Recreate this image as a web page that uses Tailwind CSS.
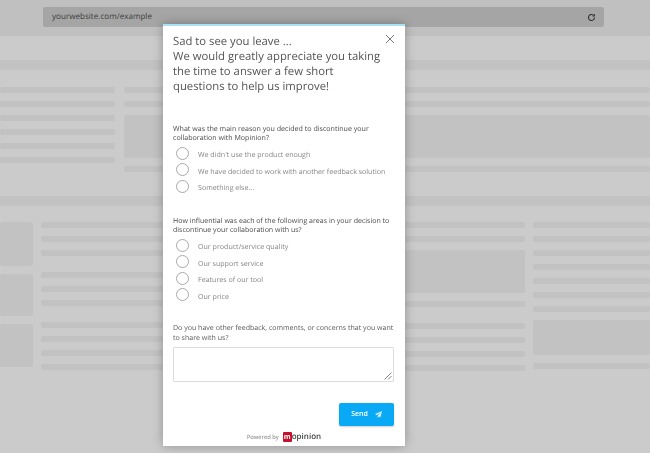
<!DOCTYPE html>
<html lang="en">
<head>
  <meta charset="UTF-8" />
  <title>Mopinion exit survey</title>
  <script src="https://cdn.jsdelivr.net/npm/@tailwindcss/browser@4"></script>
</head>
<body class="bg-[#cbcbcb] font-['Open_Sans',sans-serif] [text-rendering:geometricPrecision] overflow-hidden">
  <div class="relative w-[650px] h-[453px] overflow-hidden blur-[0.3px]">

    <!-- fake browser bar -->
    <div class="h-[36px] bg-[#c0c0c0] pl-[43px] pr-[46px] pt-[7px]">
      <div class="h-[20px] rounded-[2px] bg-[#a5a5a5] flex items-center justify-between pl-[9px] pr-[8px]">
        <span class="text-[8.1px] text-[#3d3d3d]">yourwebsite.com/example</span>
        <svg class="w-[9px] h-[9px]" viewBox="0 0 24 24" fill="none" stroke="#333" stroke-width="3">
          <path d="M20 12a8 8 0 1 1-2.6-5.9" />
          <path d="M21 2v7h-7z" fill="#333" stroke="none" />
        </svg>
      </div>
    </div>

    <!-- fake website behind the survey -->
    <div class="pt-[24px]">
      <div class="h-[10px] bg-[#c2c2c2]"></div>
      <div class="flex gap-[9px] mt-[17px] h-[85px]">
        <div class="w-[115px] flex flex-col gap-[8.5px]">
          <div class="h-[5.5px] rounded-[2px] bg-[#c2c2c2]"></div>
          <div class="h-[5.5px] rounded-[2px] bg-[#c2c2c2]"></div>
          <div class="h-[5.5px] rounded-[2px] bg-[#c2c2c2]"></div>
          <div class="h-[5.5px] rounded-[2px] bg-[#c2c2c2]"></div>
          <div class="h-[5.5px] rounded-[2px] bg-[#c2c2c2]"></div>
          <div class="h-[5.5px] rounded-[2px] bg-[#c2c2c2]"></div>
        </div>
        <div class="flex-1 flex flex-col">
          <div class="h-[5.5px] rounded-[2px] bg-[#c2c2c2]"></div>
          <div class="h-[5.5px] rounded-[2px] bg-[#c2c2c2] mt-[8.5px]"></div>
          <div class="h-[43px] rounded-[2px] bg-[#c2c2c2] mt-[8.5px]"></div>
          <div class="h-[5.5px] rounded-[2px] bg-[#c2c2c2] mt-[8px]"></div>
        </div>
      </div>
      <div class="h-[10px] bg-[#c2c2c2] mt-[24px]"></div>

      <div class="flex gap-[8px] mt-[16px]">
        <div class="w-[33px] flex flex-col gap-[8px]">
          <div class="h-[44px] rounded-[2px] bg-[#c2c2c2]"></div>
          <div class="h-[42px] rounded-[2px] bg-[#c2c2c2]"></div>
          <div class="h-[43px] rounded-[2px] bg-[#c2c2c2]"></div>
        </div>
        <div class="w-[484px] flex gap-[8px]">
          <div class="w-[238px] flex flex-col">
            <div class="h-[6px] rounded-[2px] bg-[#c2c2c2]"></div>
            <div class="h-[6px] rounded-[2px] bg-[#c2c2c2] mt-[8px]"></div>
            <div class="h-[6px] rounded-[2px] bg-[#c2c2c2] mt-[8px]"></div>
            <div class="h-[6px] rounded-[2px] bg-[#c2c2c2] mt-[16px]"></div>
            <div class="h-[6px] rounded-[2px] bg-[#c2c2c2] mt-[8px]"></div>
            <div class="h-[6px] rounded-[2px] bg-[#c2c2c2] mt-[8px]"></div>
            <div class="h-[6px] rounded-[2px] bg-[#c2c2c2] mt-[16px]"></div>
            <div class="h-[6px] rounded-[2px] bg-[#c2c2c2] mt-[8px]"></div>
            <div class="h-[6px] rounded-[2px] bg-[#c2c2c2] mt-[8px]"></div>
            <div class="h-[6px] rounded-[2px] bg-[#c2c2c2] mt-[8px]"></div>
          </div>
          <div class="flex-1 flex flex-col">
            <div class="h-[6px] rounded-[2px] bg-[#c2c2c2]"></div>
            <div class="h-[6px] rounded-[2px] bg-[#c2c2c2] mt-[8px]"></div>
            <div class="h-[43px] rounded-[2px] bg-[#c2c2c2] mt-[8px]"></div>
            <div class="h-[6px] rounded-[2px] bg-[#c2c2c2] mt-[8px]"></div>
            <div class="h-[6px] rounded-[2px] bg-[#c2c2c2] mt-[16px]"></div>
            <div class="h-[6px] rounded-[2px] bg-[#c2c2c2] mt-[8px]"></div>
            <div class="h-[6px] rounded-[2px] bg-[#c2c2c2] mt-[8px]"></div>
            <div class="h-[6px] rounded-[2px] bg-[#c2c2c2] mt-[8px]"></div>
          </div>
        </div>
        <div class="flex-1 flex flex-col">
          <div class="h-[6px] rounded-[2px] bg-[#c2c2c2]"></div>
          <div class="h-[6px] rounded-[2px] bg-[#c2c2c2] mt-[8px]"></div>
          <div class="h-[6px] rounded-[2px] bg-[#c2c2c2] mt-[8px]"></div>
          <div class="h-[6px] rounded-[2px] bg-[#c2c2c2] mt-[8px]"></div>
          <div class="h-[6px] rounded-[2px] bg-[#c2c2c2] mt-[8px]"></div>
          <div class="h-[6px] rounded-[2px] bg-[#c2c2c2] mt-[8px]"></div>
          <div class="h-[6px] rounded-[2px] bg-[#c2c2c2] mt-[8px]"></div>
          <div class="h-[35px] rounded-[2px] bg-[#c2c2c2] mt-[8px]"></div>
          <div class="h-[6px] rounded-[2px] bg-[#c2c2c2] mt-[8px]"></div>
        </div>
      </div>
    </div>

    <!-- survey modal -->
    <div class="absolute left-[163px] top-[24px] w-[242px] h-[422px] bg-white border-t-2 border-[#a9e1f6] shadow-[0_0_10px_rgba(0,0,0,0.28)] flex flex-col pl-[10px] pr-[11px]">
      <button class="absolute right-[11px] top-[9px] w-[8px] h-[8px]">
        <svg class="w-[8px] h-[8px] block" viewBox="0 0 9 9" fill="none" stroke="#555" stroke-width="0.9"><path d="M0 0l9 9M9 0l-9 9" /></svg>
      </button>

      <h1 class="mt-[8px] text-[11.3px] leading-[15px] whitespace-nowrap text-[#555] font-normal">Sad to see you leave ...<br />We would greatly appreciate you taking<br />the time to answer a few short<br />questions to help us improve!</h1>

      <p class="mt-[30.5px] text-[7.1px] leading-[9.5px] whitespace-nowrap text-[#4a4a4a]">What was the main reason you decided to discontinue your<br />collaboration with Mopinion?</p>
      <div class="mt-[3px] flex flex-col gap-[3.5px] pl-[3px]">
        <label class="flex items-center gap-[9px] h-[13px] text-[7.08px] text-[#858585]"><span class="w-[13px] h-[13px] rounded-full border-[1.2px] border-[#a8a8a8]"></span><span class="pt-[5px]">We didn't use the product enough</span></label>
        <label class="flex items-center gap-[9px] h-[13px] text-[7.08px] text-[#858585]"><span class="w-[13px] h-[13px] rounded-full border-[1.2px] border-[#a8a8a8]"></span><span class="pt-[5px]">We have decided to work with another feedback solution</span></label>
        <label class="flex items-center gap-[9px] h-[13px] text-[7.08px] text-[#858585]"><span class="w-[13px] h-[13px] rounded-full border-[1.2px] border-[#a8a8a8]"></span><span class="pt-[5px]">Something else...</span></label>
      </div>

      <p class="mt-[24px] text-[7.05px] leading-[9.5px] whitespace-nowrap text-[#4a4a4a]">How influential was each of the following areas in your decision to<br />discontinue your collaboration with us?</p>
      <div class="mt-[3px] flex flex-col gap-[3.5px] pl-[3px]">
        <label class="flex items-center gap-[9px] h-[13px] text-[7.08px] text-[#858585]"><span class="w-[13px] h-[13px] rounded-full border-[1.2px] border-[#a8a8a8]"></span><span class="pt-[5px]">Our product/service quality</span></label>
        <label class="flex items-center gap-[9px] h-[13px] text-[7.08px] text-[#858585]"><span class="w-[13px] h-[13px] rounded-full border-[1.2px] border-[#a8a8a8]"></span><span class="pt-[5px]">Our support service</span></label>
        <label class="flex items-center gap-[9px] h-[13px] text-[7.08px] text-[#858585]"><span class="w-[13px] h-[13px] rounded-full border-[1.2px] border-[#a8a8a8]"></span><span class="pt-[5px]">Features of our tool</span></label>
        <label class="flex items-center gap-[9px] h-[13px] text-[7.08px] text-[#858585]"><span class="w-[13px] h-[13px] rounded-full border-[1.2px] border-[#a8a8a8]"></span><span class="pt-[5px]">Our price</span></label>
      </div>

      <p class="mt-[22px] shrink-0 text-[7.05px] leading-[10px] whitespace-nowrap text-[#5a5a5a]">Do you have other feedback, comments, or concerns that you want<br />to share with us?</p>
      <div class="relative mt-[4px] h-[35px] shrink-0 rounded-[1px] border border-[#dcdcdc]">
        <svg class="absolute right-[1px] bottom-[1px] w-[8px] h-[8px]" viewBox="0 0 8 8" fill="none" stroke="#666" stroke-width="0.8"><path d="M0.5 7.5l7-7M4 7.5l3.5-3.5" /></svg>
      </div>

      <div class="mt-[21px] flex justify-end">
        <button class="w-[55px] h-[23px] rounded-[2px] bg-[#0aa9f5] shadow-[0_1px_2px_rgba(0,0,0,0.2)] flex items-center justify-center gap-[7px] text-[7px] font-semibold text-white">
          Send
          <svg class="w-[7px] h-[7px]" viewBox="0 0 16 16" fill="#d5effc"><path d="M16 0L0 7l4 2.5L13 3 6 11v5l3-3.5 3.5 2z" /></svg>
        </button>
      </div>

      <div class="mt-[4px] flex items-center justify-center gap-[4px] h-[14px] pl-[1px]">
        <span class="text-[5.8px] text-[#777]">Powered by</span>
        <span class="flex items-center">
          <span class="w-[9px] h-[10px] bg-[#c8102e] rounded-[1px] text-white text-[7px] leading-[9px] font-bold flex items-center justify-center">m</span>
          <span class="text-[8px] font-semibold text-[#3f3f3f] leading-none">opinion</span>
        </span>
      </div>
    </div>
  </div>
</body>
</html>
